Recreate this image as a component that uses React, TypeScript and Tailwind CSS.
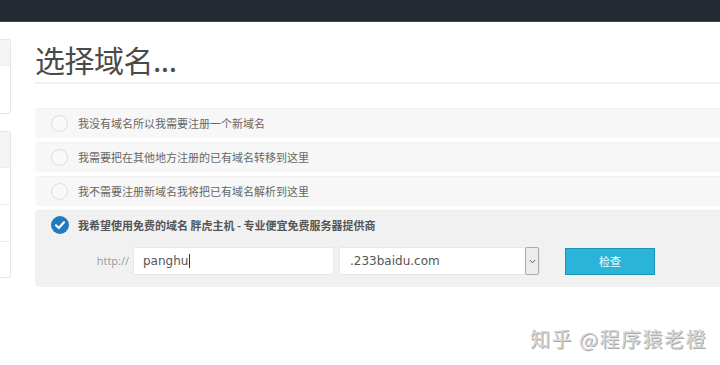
import React from "react";

const font = { fontFamily: '"Noto Sans CJK SC", "Open Sans", sans-serif' };

function Radio() {
  return (
    <div className="w-[17px] h-[17px] rounded-full border border-[#dcdcdc] bg-[#f9f9f9] shrink-0" />
  );
}

function Checked() {
  return (
    <svg width="18" height="18" viewBox="0 0 18 18" className="shrink-0">
      <circle cx="9" cy="9" r="9" fill="#1f7bbf" />
      <path d="M5 9.3 L7.8 12 L13 6.3" stroke="#fff" strokeWidth="2.2" fill="none" strokeLinecap="round" strokeLinejoin="round" />
    </svg>
  );
}

function Row({ text }: { text: string }) {
  return (
    <div className="h-[30px] bg-[#f7f7f7] rounded-l-[4px] flex items-center pl-[16px] gap-[10px] border-t border-[#f1f1f1]">
      <Radio />
      <span className="text-[11px] text-[#666]">{text}</span>
    </div>
  );
}

export default function App() {
  return (
    <div className="w-[720px] h-[365px] bg-white overflow-hidden relative" style={font}>
      <div className="h-[22px] bg-[#232a33] border-b border-[#3a434d]" />
      <div className="flex">
        <div className="w-[11px] shrink-0 pt-[17px] flex flex-col gap-[17px]">
          <div className="h-[75px] border border-l-0 border-[#e6e6e6] rounded-r-[3px] flex flex-col">
            <div className="h-[26px] bg-[#f5f5f5] border-b border-[#eee]" />
          </div>
          <div className="h-[147px] border border-l-0 border-[#e6e6e6] rounded-r-[3px] flex flex-col">
            <div className="h-[36px] bg-[#f5f5f5] border-b border-[#eee]" />
            <div className="h-[37px] border-b border-[#eee]" />
            <div className="h-[37px] border-b border-[#eee]" />
          </div>
        </div>
        <div className="flex-1 pl-[24px]">
          <div className="h-[62px] border-b-[2px] border-[#f0f0f0] flex items-end pb-[3px]">
            <h1 className="text-[30px] leading-[40px] text-[#4a4a4a] tracking-[-0.5px]">选择域名...</h1>
          </div>
          <div className="mt-[24px] flex flex-col gap-[4px]">
            <Row text="我没有域名所以我需要注册一个新域名" />
            <Row text="我需要把在其他地方注册的已有域名转移到这里" />
            <Row text="我不需要注册新域名我将把已有域名解析到这里" />
            <div className="h-[77px] bg-[#f1f1f1] rounded-l-[4px] flex flex-col pl-[16px] pt-[5px] border-t border-[#ececec]">
              <div className="flex items-center gap-[9px] h-[18px]">
                <Checked />
                <span className="text-[11px] font-bold text-[#555]">我希望使用免费的域名 胖虎主机 - 专业便宜免费服务器提供商</span>
              </div>
              <div className="flex items-center mt-[13px] h-[28px]">
                <span className="text-[11px] text-[#999] w-[82px] text-right pr-[4px]" style={{ fontFamily: '"Open Sans", sans-serif' }}>http://</span>
                <div className="w-[201px] h-[28px] bg-white border border-[#e8e8e8] rounded-[2px] flex items-center pl-[9px] text-[12px] text-[#555]" style={{ fontFamily: '"DejaVu Sans", sans-serif' }}>
                  panghu<span className="inline-block w-px h-[14px] bg-[#333] ml-[1px]" />
                </div>
                <div className="ml-[5px] w-[201px] h-[28px] bg-white border border-[#e8e8e8] rounded-[2px] flex items-center">
                  <span className="flex-1 pl-[10px] text-[12px] text-[#555]" style={{ fontFamily: '"DejaVu Sans", sans-serif' }}>.233baidu.com</span>
                  <div className="w-[14px] h-[28px] bg-[#ececec] border border-[#aaa] rounded-[2px] flex items-center justify-center">
                    <svg width="7" height="5" viewBox="0 0 7 5">
                      <path d="M0.8 1 L3.5 3.8 L6.2 1" stroke="#666" strokeWidth="1" fill="none" />
                    </svg>
                  </div>
                </div>
                <div className="ml-[25px] w-[90px] h-[27px] bg-[#2bb4d9] border border-[#1c95b8] flex items-center justify-center text-[11px] text-white">
                  检查
                </div>
              </div>
            </div>
          </div>
        </div>
      </div>
      <div className="absolute left-[530px] top-[324px] text-[20px] text-[#d6d6d6] tracking-[1.5px]" style={{ textShadow: "1px 1px 0 #a8a8a8" }}>
        知乎 @程序猿老橙
      </div>
    </div>
  );
}
